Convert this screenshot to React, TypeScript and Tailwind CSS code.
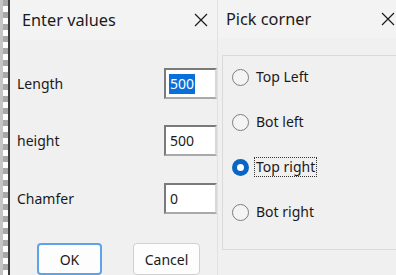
import React from "react";

const font = { fontFamily: '"Noto Sans", "Open Sans", sans-serif' };

function CloseX() {
  return (
    <svg width="14" height="14" viewBox="0 0 14 14">
      <path d="M1 1 L13 13 M13 1 L1 13" stroke="#1a1a1a" strokeWidth="1.2" fill="none" />
    </svg>
  );
}

function Input({ value, selected }: { value: string; selected?: boolean }) {
  return (
    <div className="w-[53px] h-[31px] bg-white border-2 border-t-[#7a7a7a] border-l-[#7a7a7a] border-b-[#a9a9a9] border-r-[#d8d8d8] flex items-center pl-[3px] text-[14px] text-[#1a1a1a]">
      {selected ? (
        <span className="bg-[#0a6fd8] text-white px-[1px] leading-[20px]">{value}</span>
      ) : (
        <span className="px-[1px] leading-[20px]">{value}</span>
      )}
    </div>
  );
}

function Row({ label, value, selected, mt }: { label: string; value: string; selected?: boolean; mt: string }) {
  return (
    <div className={`flex items-center justify-between h-[31px] ${mt}`}>
      <span className="pl-[7px] text-[14px] text-[#1a1a1a]">{label}</span>
      <Input value={value} selected={selected} />
    </div>
  );
}

function Radio({ label, checked, focus }: { label: string; checked?: boolean; focus?: boolean }) {
  return (
    <div className="flex items-center h-[20px]">
      {checked ? (
        <div className="w-[17px] h-[17px] rounded-full bg-[#0a64c2] flex items-center justify-center">
          <div className="w-[7px] h-[7px] rounded-full bg-white" />
        </div>
      ) : (
        <div className="w-[17px] h-[17px] rounded-full border-[1.5px] border-[#7d7d7d] bg-[#f4f4f4]" />
      )}
      <span
        className={`ml-[5px] text-[14px] text-[#1a1a1a] leading-[18px] px-[1px] ${
          focus ? "border border-dotted border-[#333]" : "border border-transparent"
        }`}
      >
        {label}
      </span>
    </div>
  );
}

export default function App() {
  return (
    <div className="w-[396px] h-[275px] overflow-hidden flex bg-[#f0f0f0]" style={font}>
      {/* left stripe */}
      <div className="w-[3px] h-full bg-[#c4c4c4]" />
      <div className="w-[5px] h-full bg-[repeating-linear-gradient(to_bottom,#a9a9a9_0px,#a9a9a9_6px,#ffffff_6px,#ffffff_12px)]" />
      <div className="h-full bg-[#3a3a3a] pl-[2px] flex">
        {/* left window */}
        <div className="w-[207px] h-full bg-[#f0f0f0] rounded-tl-[6px] flex flex-col">
          <div className="h-[42px] flex items-center justify-between pl-[12px] pr-[9px] bg-[#f3f3f3]">
            <span className="text-[16.3px] text-[#1a1a1a]">Enter values</span>
            <CloseX />
          </div>
          <Row label="Length" value="500" selected mt="mt-[28px]" />
          <Row label="height" value="500" mt="mt-[26px]" />
          <Row label="Chamfer" value="0" mt="mt-[27px]" />
          <div className="flex mt-[29px] pl-[27px] gap-[31px]">
            <div className="w-[65px] h-[32px] rounded-[4px] border-2 border-[#5ea3e8] bg-[#fdfdfd] flex items-center justify-center text-[14px] text-[#1a1a1a]">
              OK
            </div>
            <div className="w-[67px] h-[32px] rounded-[4px] border border-[#d0d0d0] bg-[#fdfdfd] flex items-center justify-center text-[14px] text-[#1a1a1a]">
              Cancel
            </div>
          </div>
        </div>
      </div>
      {/* right window */}
      <div className="flex-1 h-full bg-[#f0f0f0] border-l border-[#e2e2e2] flex flex-col min-w-0">
        <div className="h-[38px] flex items-center justify-between pl-[8px] pr-[1px] bg-[#f3f3f3]">
          <span className="text-[16.3px] text-[#1a1a1a]">Pick corner</span>
          <CloseX />
        </div>
        <div className="mt-[17px] ml-[4px] w-[200px] h-[195px] border border-[#dadada] flex flex-col pt-[11px] pl-[9px] gap-[25px]">
          <Radio label="Top Left" />
          <Radio label="Bot left" />
          <Radio label="Top right" checked focus />
          <Radio label="Bot right" />
        </div>
      </div>
    </div>
  );
}
